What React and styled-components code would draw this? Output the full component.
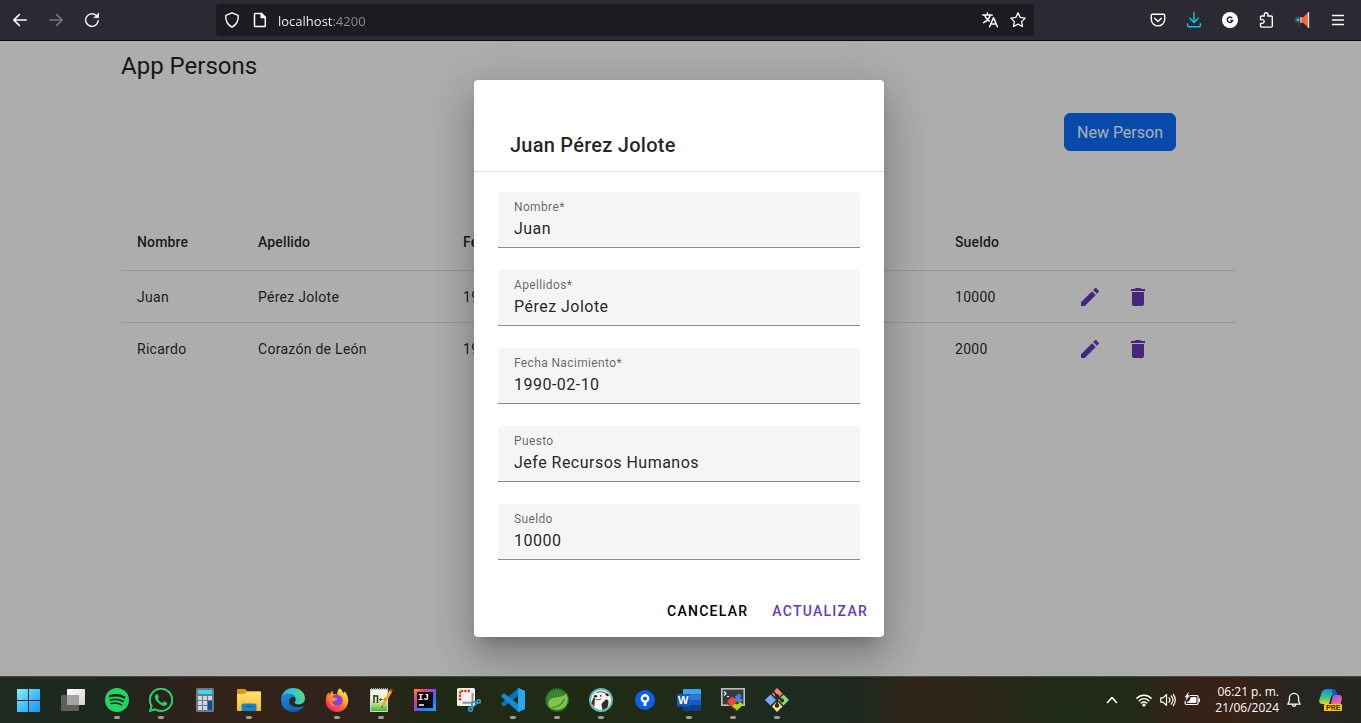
import React from "react";
import styled, { createGlobalStyle, css } from "styled-components";
import { FaWhatsapp } from "react-icons/fa";

const GlobalStyle = createGlobalStyle`
  *, *::before, *::after { box-sizing: border-box; }
  body { margin: 0; font-family: Roboto, "Liberation Sans", sans-serif; color: #212529; }
  button, input { font: inherit; }
`;

const Screen = styled.div`
  display: flex;
  flex-direction: column;
  min-height: 100vh;
`;

/* ---------- browser toolbar ---------- */

const Toolbar = styled.header`
  display: flex;
  align-items: center;
  height: 41px;
  padding: 0 5px 0 2px;
  background: #2b2a33;
  border-bottom: 1px solid #0c0c0d;
`;

const ToolButton = styled.button`
  display: grid;
  place-items: center;
  flex: none;
  width: ${(p) => (p.$narrow ? 28 : 36)}px;
  height: 32px;
  padding: 0;
  border: 0;
  background: none;
  color: ${(p) => p.$color || "#fbfbfe"};
`;

const AddressBar = styled.div`
  display: flex;
  align-items: center;
  flex: 1;
  min-width: 0;
  height: 32px;
  margin: 0 106px;
  padding: 0 2px;
  border-radius: 4px;
  background: #1c1b22;
`;

const AddressInput = styled.input`
  flex: 1;
  min-width: 0;
  height: 24px;
  margin: 0 4px;
  padding: 2px 0 0;
  border: 0;
  outline: 0;
  font-family: "Open Sans", "Noto Sans", sans-serif;
  font-size: 13px;
  line-height: 20px;
  color: #fbfbfe;
  background: linear-gradient(90deg, #fbfbfe 54px, #8f8f96 54px);
  -webkit-background-clip: text;
  background-clip: text;
  -webkit-text-fill-color: transparent;
`;

/* ---------- page ---------- */

const Viewport = styled.div`
  position: relative;
  flex: 1;
  padding-right: 3px;
  overflow: hidden;
  background: #fff;
`;

const Container = styled.main`
  max-width: 1140px;
  margin: 0 auto;
  padding: 9px 12px 0;
`;

const PageTitle = styled.h1`
  margin: 0 0 31px;
  font-size: 24px;
  font-weight: 400;
  line-height: 32px;
`;

const PageActions = styled.div`
  display: flex;
  justify-content: flex-end;
  margin-bottom: 63px;
  padding-right: 61px;
`;

const PrimaryButton = styled.button`
  padding: 7px 12px 5px;
  border: 1px solid #0d6efd;
  border-radius: 6px;
  background: #0d6efd;
  color: #fff;
  font-size: 16px;
  line-height: 24px;
`;

const Table = styled.table`
  width: 100%;
  table-layout: fixed;
  border-collapse: separate;
  border-spacing: 0;
  font-size: 14px;
  line-height: 20px;
  color: rgba(0, 0, 0, 0.87);
`;

const cell = css`
  padding: 0 16px;
  text-align: left;
  border-bottom: 1px solid rgba(0, 0, 0, 0.12);
`;

const HeadCell = styled.th`
  ${cell}
  width: ${(p) => (p.$width ? p.$width + "px" : "auto")};
  height: 57px;
  font-weight: 500;
  letter-spacing: 0.01em;
`;

const Cell = styled.td`
  ${cell}
  height: 52px;
  letter-spacing: 0.02em;
  tr:last-child > & { border-bottom: 0; }
`;

const RowActions = styled.div`
  display: flex;
`;

const IconButton = styled.button`
  display: grid;
  place-items: center;
  width: 48px;
  height: 48px;
  padding: 0;
  border: 0;
  background: none;
  color: #673ab7;
`;

/* ---------- dialog ---------- */

const Backdrop = styled.div`
  position: absolute;
  inset: 0;
  display: flex;
  align-items: center;
  justify-content: center;
  padding-right: 3px;
  background: rgba(0, 0, 0, 0.32);
`;

const Dialog = styled.form`
  width: 410px;
  max-width: 80vw;
  border-radius: 4px;
  background: #fff;
  box-shadow: 0 11px 15px -7px rgba(0, 0, 0, 0.2), 0 24px 38px 3px rgba(0, 0, 0, 0.14),
    0 9px 46px 8px rgba(0, 0, 0, 0.12);
`;

const DialogTitle = styled.h2`
  margin: 0;
  padding: 49px 36px 10px;
  border-bottom: 1px solid rgba(0, 0, 0, 0.12);
  font-size: 20px;
  font-weight: 500;
  line-height: 32px;
  letter-spacing: 0.0125em;
  color: rgba(0, 0, 0, 0.87);
`;

const DialogContent = styled.div`
  display: flex;
  flex-direction: column;
  gap: 22px;
  padding: 20px 24px 25px;
`;

const Field = styled.label`
  display: flex;
  flex-direction: column;
  height: 56px;
  padding: 7px 16px 0;
  border-bottom: 1px solid #8c8c8c;
  border-radius: 4px 4px 0 0;
  background: #f5f5f5;
`;

const FieldLabel = styled.span`
  font-size: 12px;
  line-height: 16px;
  letter-spacing: 0.03em;
  color: rgba(0, 0, 0, 0.6);
`;

const FieldInput = styled.input`
  width: 100%;
  height: 26px;
  padding: 0;
  border: 0;
  outline: 0;
  background: none;
  font-size: 16px;
  line-height: 24px;
  letter-spacing: 0.03em;
  color: rgba(0, 0, 0, 0.87);
`;

const DialogActions = styled.div`
  display: flex;
  justify-content: flex-end;
  gap: 8px;
  padding: 8px;
`;

const TextButton = styled.button`
  height: 36px;
  padding: 0 8px;
  border: 0;
  background: none;
  font-size: 14px;
  font-weight: 500;
  letter-spacing: 0.09em;
  text-transform: uppercase;
  color: ${(p) => (p.$primary ? "#673ab7" : "#000")};
`;

/* ---------- taskbar ---------- */

const Taskbar = styled.footer`
  display: flex;
  align-items: stretch;
  justify-content: space-between;
  height: 47px;
  padding: 0 9px 0 7px;
  border-top: 1px solid #454a42;
  background: linear-gradient(
    90deg,
    #1e2920 0%,
    #1c291c 7%,
    #2a221c 12%,
    #332218 17%,
    #2f231c 25%,
    #202913 32%,
    #1f2b15 48%,
    #1e2b20 57%,
    #1e281e 63%,
    #30251a 67%,
    #2b2718 72%,
    #1f2b15 78%,
    #222a16 83%,
    #352318 87%,
    #392216 91%,
    #27251f 95%,
    #26241f 100%
  );
`;

const Apps = styled.nav`
  display: flex;
`;

const AppButton = styled.button`
  display: grid;
  grid-template-rows: 24px 3px;
  row-gap: 4px;
  justify-items: center;
  align-content: start;
  width: 44px;
  padding: 11px 0 0;
  border: 0;
  background: none;

  &::after {
    content: "";
    width: 6px;
    height: 3px;
    border-radius: 2px;
    background: ${(p) => (p.$running ? "#9d9f99" : "transparent")};
  }
`;

const Tray = styled.div`
  display: flex;
  align-items: center;
  color: #fff;
`;

const TrayButton = styled.button`
  display: grid;
  place-items: center;
  width: ${(p) => p.$width || 24}px;
  height: 40px;
  padding: 0;
  border: 0;
  background: none;
  color: inherit;
`;

const Clock = styled.time`
  width: 75px;
  text-align: right;
  font-family: "Open Sans", "Noto Sans", sans-serif;
  font-size: 12px;
  line-height: 16px;
  white-space: nowrap;
`;

/* ---------- icons ---------- */

const Line = ({ size = 16, box = 16, w = 1.4, children }) => (
  <svg
    width={size}
    height={size}
    viewBox={`0 0 ${box} ${box}`}
    fill="none"
    stroke="currentColor"
    strokeWidth={w}
    strokeLinecap="round"
    strokeLinejoin="round"
    aria-hidden="true"
  >
    {children}
  </svg>
);

const Art = ({ children }) => (
  <svg width="24" height="24" viewBox="0 0 24 24" aria-hidden="true">
    {children}
  </svg>
);

const BackIcon = () => <Line w={1.7}><path d="M14.2 8H1.8M7.3 2.6 1.8 8l5.5 5.4" /></Line>;
const ForwardIcon = () => <Line w={1.6}><path d="M1.8 8h12.4M8.7 2.6 14.2 8l-5.500 5.400" /></Line>;
const ReloadIcon = () => (
  <Line w={1.4}>
    <path d="M14.2 8.600A6.300 6.300 0 1 1 12 3.200" />
    <path d="M14.600 1.200v4.500h-4.500z" fill="currentColor" strokeWidth="0.6" />
  </Line>
);
const ShieldIcon = () => (
  <Line><path d="M8 .8 14.2 3.300c.4 4.900-1.300 9.300-6.200 11.900C3.100 12.600 1.400 8.200 1.800 3.300z" /></Line>
);
const PageIcon = () => (
  <Line w={1.5}>
    <path d="M3.300 1.400h6l4 4v8.400a.8.8 0 0 1-.8.8H3.300a.8.8 0 0 1-.8-.8V2.200a.8.8 0 0 1 .8-.8z" />
    <path d="M9.200 1.500v4h4z" fill="currentColor" />
  </Line>
);
const TranslateIcon = () => (
  <Line w={1.5}>
    <path d="M.8 3h9.400M5.400.9V3M8.200 3.200C7.300 6.500 5 9 1.500 10.600M2.800 3.400C3.700 6 5.300 7.800 7.300 9" />
    <path d="M7.600 14.700 11.500 5.600l3.900 9.100M9 11.900h5" />
  </Line>
);
const StarIcon = () => (
  <Line w={1.3}>
    <path d="m8 .9 2.200 4.500 5 .7-3.600 3.500.9 4.900L8 12.200l-4.500 2.300.9-4.900L.8 6.100l5-.7z" />
  </Line>
);
const PocketIcon = () => (
  <Line w={1.4}>
    <path d="M2.500 2.200h11a1.200 1.200 0 0 1 1.200 1.200v3.800a6.700 6.700 0 0 1-13.400 0V3.400a1.200 1.200 0 0 1 1.200-1.200z" />
    <path d="M4.700 6.300 8 9.400l3.300-3.100" />
  </Line>
);
const DownloadIcon = () => (
  <Line><path d="M8 .8v9.400M3.800 6.200 8 10.400l4.200-4.200M1.600 11.800v1.400c0 .9.5 1.500 1.400 1.500h10c.9 0 1.400-.6 1.400-1.500v-1.400" /></Line>
);
const GrammarIcon = () => (
  <svg width="16" height="16" viewBox="0 0 16 16" aria-hidden="true">
    <circle cx="8" cy="8" r="8" fill="#fff" />
    <path d="M10.200 6.200A2.700 2.700 0 1 0 10.600 8.600H8.400" fill="none" stroke="#2b2a33" strokeWidth="1.5" />
  </svg>
);
const PuzzleIcon = () => (
  <Line w={1.4}>
    <path d="M2.500 5.200c0-.8.4-1.200 1.200-1.200h2.600V2.600a1.800 1.800 0 0 1 3.600 0V4h3.300c.7 0 1.100.4 1.100 1.100v9c0 .6-.4 1-1.100 1H3.600c-.7 0-1.100-.4-1.100-1.100v-2.600h1.700a1.900 1.900 0 0 0 0-3.800H2.500z" />
  </Line>
);
const MegaphoneIcon = () => (
  <svg width="16" height="16" viewBox="0 0 16 16" aria-hidden="true">
    <path d="M3.500 8.500h3l-1 6.800H4z" fill="#1c4159" />
    <circle cx="3.700" cy="7.800" r="3.500" fill="#264b65" />
    <circle cx="4" cy="7.800" r="1.600" fill="#7894a6" />
    <path d="M6 5.200h3L14 .7v14.200l-5-4.200H6z" fill="#ff6334" />
    <path d="M6 5.200h2v5.500H6z" fill="#b3aaa8" />
    <path d="M14.500 0v16" stroke="#d3e2ec" strokeWidth="1.4" />
  </svg>
);
const MenuIcon = () => <Line w={1.4}><path d="M2.500 3.500h11M2.500 8h11M2.500 12.500h11" /></Line>;

const EditIcon = () => (
  <svg width="24" height="24" viewBox="0 0 24 24" fill="currentColor" aria-hidden="true">
    <path d="M3 17.250V21h3.750L17.810 9.940l-3.750-3.750L3 17.250zM20.710 7.040c.39-.39.39-1.020 0-1.410l-2.340-2.340c-.39-.39-1.020-.39-1.410 0l-1.830 1.830 3.750 3.750 1.830-1.830z" />
  </svg>
);
const DeleteIcon = () => (
  <svg width="24" height="24" viewBox="0 0 24 24" fill="currentColor" aria-hidden="true">
    <path d="M6 19c0 1.100.9 2 2 2h8c1.100 0 2-.9 2-2V7H6v12zM19 4h-3.500l-1-1h-5l-1 1H5v2h14V4z" />
  </svg>
);

const WindowsIcon = () => (
  <Art>
    <defs>
      <linearGradient id="win" x1="0" y1="0" x2="1" y2="1">
        <stop offset="0" stopColor="#7ef0ff" />
        <stop offset="1" stopColor="#0f94f8" />
      </linearGradient>
    </defs>
    <path fill="url(#win)" d="M0 1h11v11H0zM12 1h11v11H12zM0 13h11v11H0zM12 13h11v11H12z" />
  </Art>
);
const TaskViewIcon = () => (
  <Art>
    <defs>
      <linearGradient id="tv" x1="0" y1="0" x2="1" y2="1">
        <stop offset="0" stopColor="#fff" />
        <stop offset="1" stopColor="#d4d4d4" />
      </linearGradient>
    </defs>
    <rect x="6" y="1" width="18" height="16" rx="1" fill="url(#tv)" />
    <rect x="0" y="7" width="18" height="16" rx="1" fill="#5e5f5d" />
    <path d="M6 7h12v10H6z" fill="#a2a3a3" />
  </Art>
);
const SpotifyIcon = () => (
  <Art>
    <circle cx="12" cy="12" r="12" fill="#1ed760" />
    <g fill="none" stroke="#15251a" strokeLinecap="round">
      <path d="M5 8.200c5-1.500 10.500-1 14.500 1.300" strokeWidth="2.300" />
      <path d="M5.500 12.100c4.500-1.300 8.800-.8 12.600 1.300" strokeWidth="1.900" />
      <path d="M6 15.600c4-1 7.400-.6 10.600 1.200" strokeWidth="1.500" />
    </g>
  </Art>
);
const WhatsappIcon = () => (
  <svg width="24" height="24" viewBox="0 0 24 24" aria-hidden="true">
    <FaWhatsapp x="-2" y="-2" size={28} color="#25d366" />
  </svg>
);
const CalculatorIcon = () => (
  <Art>
    <rect x="3" y="0" width="18" height="24" rx="1.500" fill="#6b7c89" />
    <rect x="5" y="2" width="14" height="4" fill="#42d3f5" />
    <path fill="#cdd7de" d="M5 8h4v4H5zM10 8h4v4h-4zM15 8h4v4h-4zM5 13h4v4H5zM10 13h4v4h-4zM5 18h4v4H5zM10 18h4v4h-4z" />
    <path fill="#144a95" d="M15 13h4v9h-4z" />
  </Art>
);
const FolderIcon = () => (
  <Art>
    <defs>
      <linearGradient id="fold" x1="0" y1="0" x2="0" y2="1">
        <stop offset="0" stopColor="#ffe07a" />
        <stop offset="1" stopColor="#f9bd24" />
      </linearGradient>
    </defs>
    <path d="M0 2.200c0-.7.5-1.200 1.200-1.200H8l2.500 2.500H23c.6 0 1 .4 1 1V10H0z" fill="#dc9b0e" />
    <path d="M0 6h7.500L10 3.500h13c.6 0 1 .4 1 1V22c0 .6-.4 1-1 1H1c-.6 0-1-.4-1-1z" fill="url(#fold)" />
    <path d="M4.500 23v-5.500c0-1.300.8-2 2-2h11c1.200 0 2 .7 2 2V23z" fill="#1684cf" />
    <path d="M8.500 18.500h7" stroke="#0a62a4" strokeWidth="1.300" />
  </Art>
);
const EdgeIcon = () => (
  <Art>
    <defs>
      <linearGradient id="edgeTop" x1="0" y1="0.500" x2="1" y2="0.300">
        <stop offset="0" stopColor="#2ba8e4" />
        <stop offset="0.500" stopColor="#2dc5d8" />
        <stop offset="1" stopColor="#62dd62" />
      </linearGradient>
      <linearGradient id="edgeLow" x1="0" y1="0" x2="0.700" y2="1">
        <stop offset="0" stopColor="#1b8fdc" />
        <stop offset="1" stopColor="#0f5ca8" />
      </linearGradient>
    </defs>
    <path d="M.1 11C.7 4.600 5.600 0 12 0c7 0 12 4.800 12 10.200 0 3.900-3 6.200-6.400 6.200-2.500 0-4-.8-4-1.800 0-.7 1.100-1.200 1.100-3C14.700 8.800 11.800 6 7.800 6 4.600 6 1.600 7.800.1 11z" fill="url(#edgeTop)" />
    <path d="M.1 11C1.500 7.800 4.600 6 7.800 6c3.300 0 5.900 1.900 6.700 4.200C13.600 9 12 8.700 10.800 9.300 8.500 10.400 7.700 13 8.400 15.600c.9 3.500 4 5.800 8.100 5.800 2.100 0 3.900-.5 5.500-1.500-2.400 2.800-6 4.100-9.800 4.100C5 24-.5 18.500.1 11z" fill="url(#edgeLow)" />
    <path d="M8.400 15.600c.9 3.500 4 5.800 8.100 5.800 2.700 0 5.200-1 6.100-2.600.3-.6 0-1-.5-.7-5 2.500-11.600.9-13.700-2.500z" fill="#1277c6" />
  </Art>
);
const FirefoxIcon = () => (
  <Art>
    <defs>
      <linearGradient id="fox" x1="0.850" y1="0" x2="0.200" y2="1">
        <stop offset="0" stopColor="#fff44f" />
        <stop offset="0.350" stopColor="#ffb32c" />
        <stop offset="0.600" stopColor="#ff6b32" />
        <stop offset="1" stopColor="#f01b6f" />
      </linearGradient>
    </defs>
    <path d="M14.500.2c2 1.100 3.300 3 3.700 5 .8-.4 1.200-1.100 1.300-2 2.900 3 3.900 6.700 3.700 10.300C22.800 19.300 18.200 24 12 24 5.500 24 .7 19 .7 12.600c0-3.200 1-6 3-8.300.1.900.4 1.600.9 2.100.8-1.700 1.600-2.900 2.900-3.700-.1 1.200.2 2.300.9 3.200 1.300-.1 2.600.1 3.800.8-.1-2.400.6-4.700 2.300-6.500z" fill="url(#fox)" />
    <path d="M7.300 8.600c2.400-2.800 8.800-2.300 10.200 2.200 1 3.700-1.700 7-5.300 7-3.300 0-5.800-2.200-5.700-4.900 1 .5 2.200.4 3.400-.4 1-.7 2.100-.9 2.100-1.700 0-.6-1.700-.5-2.600-.8-.9-.3-1.600-.9-2.100-1.400z" fill="#8a3fe0" />
    <path d="M3.500 8.900c1.900-1.300 3.500-.9 4.500 0l1.800 1.200 2.800.5c-.3 1-1.600 1.600-2.700 2.300-1.300.8-2.500.7-3.400 0 .6 3.200 3 5.100 6 4.900C6.500 19.500 2.900 14 3.500 8.900z" fill="#ff8a2e" />
  </Art>
);
const NotepadIcon = () => (
  <Art>
    <defs>
      <linearGradient id="npp" x1="0" y1="0" x2="0" y2="1">
        <stop offset="0" stopColor="#fbfcf4" />
        <stop offset="0.500" stopColor="#e1f2c4" />
        <stop offset="1" stopColor="#3fb51d" />
      </linearGradient>
    </defs>
    <path d="M1.500 1.500h17v22h-17z" fill="url(#npp)" stroke="#d5d8d0" />
    <path d="M2 1h17" stroke="#b8b8b8" strokeWidth="2" strokeDasharray="1 1" />
    <path d="M5 7v8M5 8h3.500v7" fill="none" stroke="#26331f" strokeWidth="1.500" />
    <path d="M10 11.500h3.500M14.500 11.500h2.500M11.700 10v3M15.700 10v3" fill="none" stroke="#45533c" strokeWidth="1" />
    <path d="m12.500 20 .5-4.200L20.500 2l2.700 1.800-8 13.700z" fill="#f2a62a" />
    <path d="m20.500 2 1-1.500 2.500 1.800-1 1.500z" fill="#b84646" />
    <path d="m12.500 20 .4-2.200 1.400 1z" fill="#333" />
  </Art>
);
const IntellijIcon = () => (
  <Art>
    <defs>
      <linearGradient id="ij" x1="0" y1="0" x2="1" y2="1">
        <stop offset="0" stopColor="#ff9a2e" />
        <stop offset="0.250" stopColor="#f23a73" />
        <stop offset="0.480" stopColor="#8a49e8" />
        <stop offset="0.700" stopColor="#1283f5" />
        <stop offset="1" stopColor="#22a5f7" />
      </linearGradient>
    </defs>
    <path d="M1 1h22v22H1z" fill="url(#ij)" />
    <path d="M4 4h16v16H4z" fill="#090612" />
    <text x="5" y="12" fill="#fff" fontSize="9" fontWeight="700" fontFamily="Liberation Mono, monospace">IJ</text>
    <path d="M6 17h5" stroke="#fff" strokeWidth="1.500" />
  </Art>
);
const SnipIcon = () => (
  <Art>
    <rect x="0" y="0" width="18" height="18" rx="1.500" fill="#f2f2f3" />
    <path d="M13 3H3v10" fill="none" stroke="#d3481b" strokeWidth="2.400" strokeDasharray="2.400 1" />
    <path d="M15.500 5v9.500M5.500 14.700h10" stroke="#8f979f" strokeWidth="2" />
    <path d="M14.500 14H20M15.500 14l-1 5" stroke="#70808c" strokeWidth="1.800" />
    <circle cx="21.800" cy="13.600" r="1.700" fill="none" stroke="#2c9fdd" strokeWidth="1.600" />
    <circle cx="13.500" cy="21.300" r="1.900" fill="none" stroke="#2c9fdd" strokeWidth="1.600" />
    <path d="m14.800 20 5.500-5" stroke="#2c9fdd" strokeWidth="1.600" />
  </Art>
);
const CodeIcon = () => (
  <Art>
    <path d="m17.200 0 6 2.800c.5.200.8.700.8 1.200v16c0 .5-.3 1-.8 1.200L17.200 24z" fill="#29a7f1" />
    <path d="M17.200 0 .7 15.100c-.5.500-.5 1.200 0 1.600l1.500 1.400c.4.400 1 .4 1.500.1L18 7.300z" fill="#0b72b9" />
    <path d="M17.200 24 .7 8.900c-.5-.5-.5-1.200 0-1.600l1.500-1.400c.4-.4 1-.4 1.500-.1L18 16.700z" fill="#158bd4" />
    <path d="M17.200 0 24 3v18l-6.800 3z" fill="#29a7f1" />
  </Art>
);
const SpringIcon = () => (
  <Art>
    <circle cx="12" cy="12" r="10.800" fill="#37862f" />
    <circle cx="12" cy="12" r="11" fill="none" stroke="#347c2d" strokeWidth="2" strokeDasharray="1.400 1.100" />
    <path d="M21.500 5.500c2.300 5.600 1.600 12.700-4.500 15.300-4.200 1.800-9.600.7-11.900-1.100C2.200 17.200 3 12.500 6.500 10.600c4-2.100 11-.6 15-5.100z" fill="#83c44a" />
    <path d="M6.500 19.500c6.500-.2 10.600-3 13.200-8.600" fill="none" stroke="#37862f" strokeWidth="1.200" />
  </Art>
);
const DbeaverIcon = () => (
  <Art>
    <circle cx="12" cy="12" r="11" fill="#f7f5f1" stroke="#63b9bd" strokeWidth="2" />
    <path d="M2.300 15 4.600 9.500 6 10l-.8 8.800zM14.500 13.700l2.500-2.500 2 .7c1 1.700.5 6-1.300 8.200l-4.200 2-.7-4.300c-.8-1.300.1-2.900 1.700-4.100z" fill="#352922" />
    <path d="M7.500 5C9 3.600 14 3 17 5.500" fill="none" stroke="#4a3d35" strokeWidth="1" />
    <path d="M16.200 5.500c2-.7 3.700.5 3.600 2.300-1 1.200-3 .3-3.600-2.300z" fill="#2e2521" />
    <circle cx="11.800" cy="7.800" r="0.900" fill="#2e2521" />
    <ellipse cx="6.500" cy="8.200" rx="1.600" ry="1.200" fill="#2e2521" />
    <path d="M6.500 11.500c2 .5 4 .3 6-.8" fill="none" stroke="#4a3d35" strokeWidth="0.800" />
  </Art>
);
const SourcetreeIcon = () => (
  <Art>
    <circle cx="12" cy="12" r="10" fill="#0b5fea" />
    <circle cx="12" cy="10.500" r="3.200" fill="#0b5fea" stroke="#fff" strokeWidth="2.400" />
    <path d="M12 14v4" stroke="#fff" strokeWidth="3" />
  </Art>
);
const WordIcon = () => (
  <Art>
    <path d="M6 2c0-.6.4-1 1-1h16c.6 0 1 .4 1 1v4.500H6z" fill="#41a5ee" />
    <path d="M6 6.500h18V12H6z" fill="#2b7cd3" />
    <path d="M6 12h18v5.500H6z" fill="#185abd" />
    <path d="M6 17.500h18V22c0 .6-.4 1-1 1H7c-.6 0-1-.4-1-1z" fill="#103f91" />
    <rect x="0" y="6" width="12.500" height="12.500" rx="1" fill="#185abd" />
    <text x="1" y="16" fill="#fff" fontSize="11" fontWeight="700" fontFamily="Liberation Sans, sans-serif">W</text>
  </Art>
);
const TerminalIcon = () => (
  <Art>
    <rect x="0.800" y="0.800" width="22.400" height="16.400" fill="#38393a" stroke="#bfc0c0" strokeWidth="1.600" />
    <path d="m3 3.500 2 2-2 2M6 8.500h2" fill="none" stroke="#eee" strokeWidth="1.200" />
    <path d="m6 13.500 5-5 2.500 2.500 3-3L19 10.500l-5 5-3 3z" fill="#e64b42" />
    <path d="m14 8.500 4-3 2.500 2.500L19 10l3 2-3.500 3.500-3.500-4z" fill="#3f83e3" />
    <path d="m11 18.500 3-3 2 1.500 3-3 3.500 2.500-6.500 6z" fill="#a6dc16" />
    <path d="m6 13.500 5 5 5.500 4-1 1L6 15.500z" fill="#a82622" />
  </Art>
);
const GitIcon = () => (
  <Art>
    <path d="m12 0 5.500 5.500L12 11 7 5.500z" fill="#fb8181" />
    <path d="M18.500 6.500 24 12l-5.500 5.500L13 12z" fill="#8ed873" />
    <path d="m12 13 5.500 5.500L12 24l-5-5.500z" fill="#fbe48a" />
    <path d="M5.500 6.500 11 12l-5.500 5.500L0 12z" fill="#78acf5" />
    <path d="m8 3 4 5v10M12 8l5 4.500" fill="none" stroke="#30261f" strokeWidth="1.800" />
    <circle cx="12" cy="8" r="2" fill="#30261f" />
    <circle cx="12" cy="17.500" r="2.200" fill="#30261f" />
    <circle cx="17" cy="12.500" r="2" fill="#30261f" />
  </Art>
);

const ChevronUpIcon = () => <Line w={1.6}><path d="m3.500 10.500 4.500-5 4.500 5" /></Line>;
const WifiIcon = () => (
  <Line w={1.4}>
    <path d="M.8 6.200c4-4 10.400-4 14.400 0M3.100 8.700a6.900 6.900 0 0 1 9.800 0M5.300 11.100a3.800 3.800 0 0 1 5.400 0" />
    <circle cx="8" cy="13" r="0.900" fill="currentColor" />
  </Line>
);
const SoundIcon = () => (
  <Line w={1.2}>
    <path d="M.8 5.900h2.200L6.500 2.500v11L3 10.100H.8zM9 5.800c1.200 1.300 1.200 3.100 0 4.400M11.200 4c2.100 2.400 2.100 5.600 0 8M13.300 2.500c2.600 3.200 2.600 7.800 0 11" />
  </Line>
);
const BatteryIcon = () => (
  <Line w={1.2}>
    <path d="M6.500 3.500h6.200c.9 0 1.400.5 1.400 1.400v6.200c0 .9-.5 1.400-1.400 1.400H2.500c-.9 0-1.400-.5-1.400-1.400V9.500M15.500 7v2.500" />
    <path d="M7.500 5.500H12v5H3.500V9.800H5z" fill="currentColor" strokeWidth="0.8" />
    <path d="M4.500.5 1 5h2L1.800 8.300 5.800 3.500H3.700z" fill="currentColor" strokeWidth="0.4" />
  </Line>
);
const BellIcon = () => (
  <Line w={1.3}>
    <path d="M8 1.300a4.600 4.600 0 0 0-4.600 4.600V9l-1.600 3.200h12.400L12.600 9V5.900A4.600 4.600 0 0 0 8 1.300zM6.200 12.500a1.800 1.800 0 0 0 3.600 0" />
  </Line>
);
const CopilotIcon = () => (
  <Art>
    <defs>
      <linearGradient id="coA" x1="0" y1="0" x2="0" y2="1">
        <stop offset="0" stopColor="#1f86e8" />
        <stop offset="0.500" stopColor="#2fc08f" />
        <stop offset="1" stopColor="#e7d52b" />
      </linearGradient>
      <linearGradient id="coB" x1="0.300" y1="0" x2="0.700" y2="1">
        <stop offset="0" stopColor="#9a5cf0" />
        <stop offset="0.600" stopColor="#e45fb0" />
        <stop offset="1" stopColor="#fb8b5e" />
      </linearGradient>
    </defs>
    <path d="M8.500 1H14c1.700 0 2.600 1 3.100 2.700L18 7h-3c-1.700 0-2.600.8-3.100 2.400L10 16H3.500c-3 0-3.800-2-2.900-5l2.100-7C3.600 2 5.500 1 8.500 1z" fill="url(#coA)" />
    <path d="M12.500 1H14c1.700 0 2.600 1 3.100 2.700L18 7h-4.500z" fill="#1757c4" />
    <path d="M15.500 7H19c3.500 0 4.500 2 3.700 4.800L21 18h-9.500l1.900-8.200C13.800 8 14.400 7 15.500 7z" fill="url(#coB)" />
    <rect x="5" y="16" width="18" height="7" rx="1" fill="#fdc70c" />
    <text x="7" y="22" fill="#2b2410" fontSize="7" fontWeight="700" fontFamily="Liberation Sans, sans-serif">PRE</text>
  </Art>
);

/* ---------- data ---------- */

const persons = [
  { nombre: "Juan", apellido: "Pérez Jolote", fecha: "1990-02-10", puesto: "Jefe Recursos Humanos", sueldo: 10000 },
  { nombre: "Ricardo", apellido: "Corazón de León", fecha: "1990-02-10", puesto: "Desarrollador", sueldo: 2000 },
];

const columns = [
  ["Nombre", 121],
  ["Apellido", 205],
  ["Fecha Nacimiento", 180],
  ["Puesto", null],
  ["Sueldo", 111],
];

const fields = [
  { id: "nombre", label: "Nombre*", value: "Juan" },
  { id: "apellidos", label: "Apellidos*", value: "Pérez Jolote" },
  { id: "fecha", label: "Fecha Nacimiento*", value: "1990-02-10" },
  { id: "puesto", label: "Puesto", value: "Jefe Recursos Humanos" },
  { id: "sueldo", label: "Sueldo", value: "10000" },
];

const extensions = [
  ["Pocket", PocketIcon],
  ["Downloads", DownloadIcon, "#00cfea"],
  ["Grammar", GrammarIcon],
  ["Extensions", PuzzleIcon],
  ["Megaphone", MegaphoneIcon],
  ["Menu", MenuIcon],
];

const apps = [
  ["Start", WindowsIcon],
  ["Task view", TaskViewIcon],
  ["Spotify", SpotifyIcon, true],
  ["WhatsApp", WhatsappIcon, true],
  ["Calculator", CalculatorIcon],
  ["Files", FolderIcon, true],
  ["Edge", EdgeIcon],
  ["Firefox", FirefoxIcon, true],
  ["Notepad++", NotepadIcon, true],
  ["IntelliJ", IntellijIcon],
  ["Snipping tool", SnipIcon],
  ["VS Code", CodeIcon, true],
  ["Spring", SpringIcon, true],
  ["DBeaver", DbeaverIcon, true],
  ["Sourcetree", SourcetreeIcon],
  ["Word", WordIcon, true],
  ["Terminal", TerminalIcon, true],
  ["Git", GitIcon, true],
];

export default function App() {
  return (
    <Screen>
      <GlobalStyle />
      <Toolbar>
        <ToolButton aria-label="Back"><BackIcon /></ToolButton>
        <ToolButton aria-label="Forward" $color="#77767e"><ForwardIcon /></ToolButton>
        <ToolButton aria-label="Reload"><ReloadIcon /></ToolButton>
        <AddressBar>
          <ToolButton $narrow aria-label="Protection"><ShieldIcon /></ToolButton>
          <ToolButton $narrow aria-label="Site information"><PageIcon /></ToolButton>
          <AddressInput aria-label="Address" defaultValue="localhost:4200" />
          <ToolButton $narrow aria-label="Translate"><TranslateIcon /></ToolButton>
          <ToolButton $narrow aria-label="Bookmark"><StarIcon /></ToolButton>
        </AddressBar>
        {extensions.map(([name, Icon, color]) => (
          <ToolButton key={name} aria-label={name} $color={color}><Icon /></ToolButton>
        ))}
      </Toolbar>

      <Viewport>
        <Container>
          <PageTitle>App Persons</PageTitle>
          <PageActions>
            <PrimaryButton type="button">New Person</PrimaryButton>
          </PageActions>
          <Table>
            <thead>
              <tr>
                {columns.map(([name, width]) => (
                  <HeadCell key={name} $width={width} scope="col">{name}</HeadCell>
                ))}
                <HeadCell $width={187} aria-label="Acciones" />
              </tr>
            </thead>
            <tbody>
              {persons.map((p) => (
                <tr key={p.nombre}>
                  <Cell>{p.nombre}</Cell>
                  <Cell>{p.apellido}</Cell>
                  <Cell>{p.fecha}</Cell>
                  <Cell>{p.puesto}</Cell>
                  <Cell>{p.sueldo}</Cell>
                  <Cell>
                    <RowActions>
                      <IconButton type="button" aria-label="Editar"><EditIcon /></IconButton>
                      <IconButton type="button" aria-label="Eliminar"><DeleteIcon /></IconButton>
                    </RowActions>
                  </Cell>
                </tr>
              ))}
            </tbody>
          </Table>
        </Container>

        <Backdrop>
          <Dialog role="dialog" aria-labelledby="dialog-title" onSubmit={(e) => e.preventDefault()}>
            <DialogTitle id="dialog-title">Juan Pérez Jolote</DialogTitle>
            <DialogContent>
              {fields.map((f) => (
                <Field key={f.id} htmlFor={f.id}>
                  <FieldLabel>{f.label}</FieldLabel>
                  <FieldInput id={f.id} defaultValue={f.value} />
                </Field>
              ))}
            </DialogContent>
            <DialogActions>
              <TextButton type="button">Cancelar</TextButton>
              <TextButton type="submit" $primary>Actualizar</TextButton>
            </DialogActions>
          </Dialog>
        </Backdrop>
      </Viewport>

      <Taskbar>
        <Apps aria-label="Taskbar">
          {apps.map(([name, Icon, running]) => (
            <AppButton key={name} aria-label={name} $running={running}><Icon /></AppButton>
          ))}
        </Apps>
        <Tray>
          <TrayButton $width={40} aria-label="Hidden icons"><ChevronUpIcon /></TrayButton>
          <TrayButton aria-label="Network"><WifiIcon /></TrayButton>
          <TrayButton aria-label="Volume"><SoundIcon /></TrayButton>
          <TrayButton aria-label="Battery"><BatteryIcon /></TrayButton>
          <Clock dateTime="2024-06-21T18:21">06:21 p. m.<br />21/06/2024</Clock>
          <TrayButton $width={30} aria-label="Notifications"><BellIcon /></TrayButton>
          <TrayButton $width={43} aria-label="Copilot"><CopilotIcon /></TrayButton>
        </Tray>
      </Taskbar>
    </Screen>
  );
}
